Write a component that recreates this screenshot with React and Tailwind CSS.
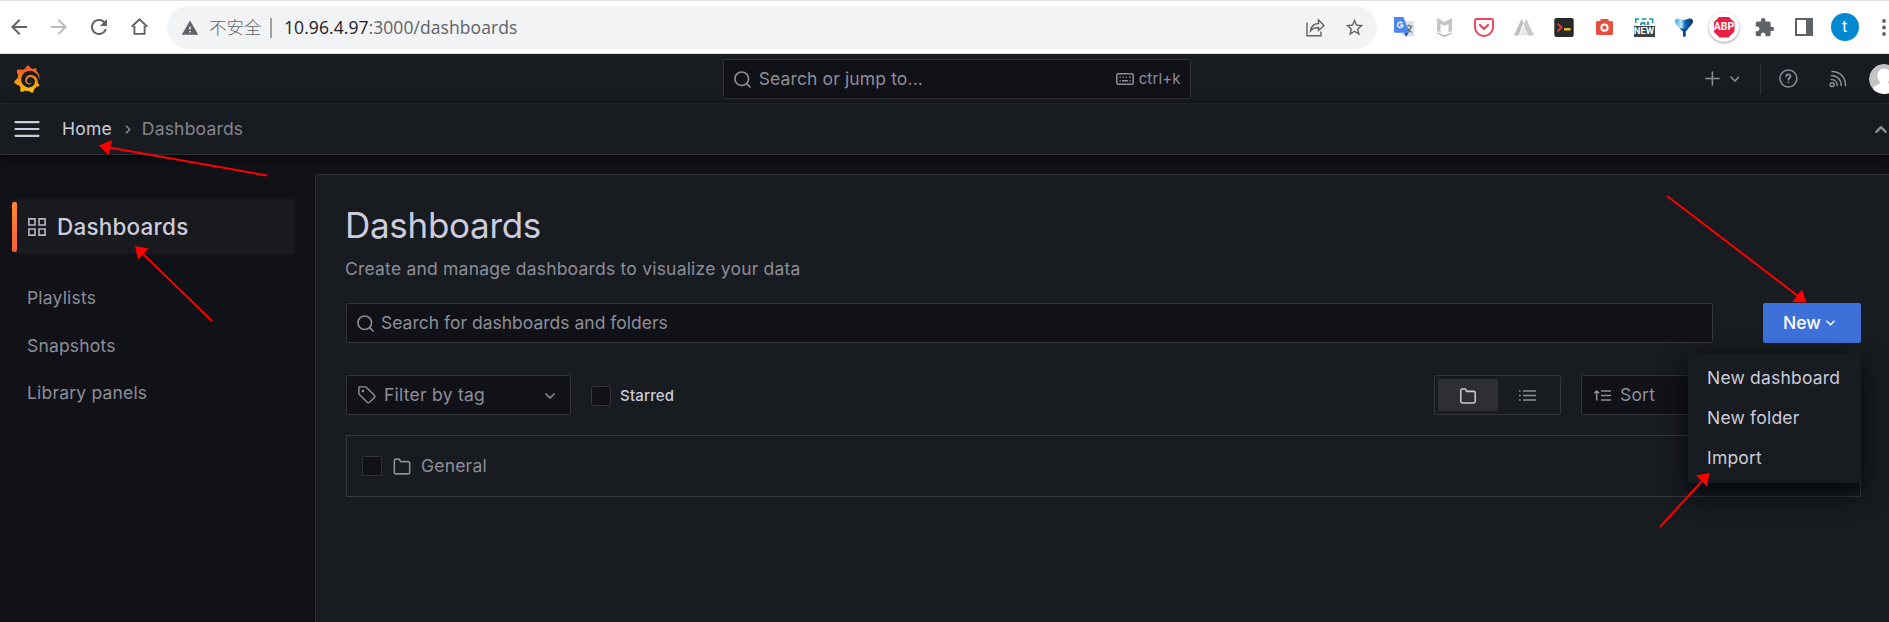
import React from 'react';
import { SiGrafana } from 'react-icons/si';
import { MdArrowBack, MdArrowForward, MdExtension, MdRefresh, MdStarBorder, MdWarning } from 'react-icons/md';

function Search({ className }) {
  return (
    <svg className={className} viewBox="0 0 18 18" fill="none" stroke="currentColor" strokeWidth="1.7" strokeLinecap="round">
      <circle cx="8.2" cy="8.2" r="7.2" />
      <path d="M13.4 13.4 17 17" />
    </svg>
  );
}

function Chevron({ className, up }) {
  return (
    <svg className={className} viewBox="0 0 10 6" fill="none" stroke="currentColor" strokeWidth="1.6" strokeLinecap="round" strokeLinejoin="round">
      <path d={up ? 'M1 5 5 1 9 5' : 'M1 1 5 5 9 1'} />
    </svg>
  );
}

function Folder({ className }) {
  return (
    <svg className={className} viewBox="0 0 18 18" fill="none" stroke="currentColor" strokeWidth="1.7" strokeLinejoin="round">
      <path d="M.9 15V3Q.9 1.2 2.7 1.2H6.2L7.4 3.8H15.3Q17.1 3.8 17.1 5.6V15Q17.1 16.8 15.3 16.8H2.7Q.9 16.8.9 15Z" />
    </svg>
  );
}

function Cell({ children }) {
  return <div className="flex h-full w-10 shrink-0 items-center justify-center">{children}</div>;
}

function Extensions() {
  return (
    <div className="flex h-[52px] w-[505px] shrink-0 overflow-hidden">
      <Cell>
        <svg className="h-5 w-5" viewBox="0 0 20 20">
          <rect x="8" y="4" width="12" height="15.5" rx="1" fill="#dfe1e4" />
          <path d="M11.5 9h7M15 7.5V9M17.5 9c-.8 3-2.5 5-5 6.500M13 10.500c1 2 2.600 4 4.800 5" stroke="#5f7078" strokeWidth="1.200" fill="none" />
          <path d="M10 15.500h5L12 19.800Z" fill="#2a48b8" />
          <path d="M1 0H9.500L15 15.800H1Q0 15.800 0 14.800V1Q0 0 1 0Z" fill="#4a86ee" />
          <path d="M8.300 6.200A2.700 2.700 0 1 0 8.900 8.300H6.200" stroke="#fff" strokeWidth="1.400" fill="none" />
        </svg>
      </Cell>
      <Cell>
        <svg className="h-[19px] w-[15px]" viewBox="0 0 15 19">
          <path d="M0 0 7.500 4 15 0V13L11.500 14.500V6L7.500 8 3.500 6V14.500L0 13Z" fill="#c4c4c4" />
          <path d="M0 14.500 7.500 17.300 15 14.500V15.500L7.500 19 0 15.500Z" fill="#b0b0b0" />
        </svg>
      </Cell>
      <Cell>
        <svg className="h-[19px] w-5" viewBox="0 0 20 19" fill="none" stroke="#ee4358" strokeWidth="1.900" strokeLinejoin="round">
          <path d="M2.500 1H17.500Q19 1 19 2.500V9A9 9 0 0 1 1 9V2.500Q1 1 2.500 1Z" />
          <path d="m6 7 4 4 4-4" strokeWidth="2.200" strokeLinecap="round" />
        </svg>
      </Cell>
      <Cell>
        <svg className="h-[17px] w-5" viewBox="0 0 20 17">
          <path d="M7.500 0 9.500 3.500 4.500 16.500H0Z" fill="#bebebe" />
          <path d="M12.500 0 20 16.500H14L9.500 5Z" fill="#cacaca" />
          <path d="M9.700 7 14 16.500H5Z" fill="#e8e8e8" />
        </svg>
      </Cell>
      <Cell>
        <svg className="h-[19px] w-5" viewBox="0 0 20 19" fill="none">
          <rect x=".3" width="19.400" height="19" rx="2" fill="#292929" />
          <path d="m3.500 5.500 4 4-4 4" stroke="#df3b34" strokeWidth="1.900" />
          <path d="M10 11.300h6.500" stroke="#f1bd22" strokeWidth="2.400" />
        </svg>
      </Cell>
      <Cell>
        <svg className="h-4 w-[17px]" viewBox="0 0 17 16">
          <path d="M4.500 0h8v2H15.500Q17 2 17 3.500V14.500Q17 16 15.500 16H1.500Q0 16 0 14.500V3.500Q0 2 1.500 2H4.500Z" fill="#e84e40" />
          <circle cx="8.500" cy="8.700" r="3.100" fill="none" stroke="#fff" strokeWidth="2" />
        </svg>
      </Cell>
      <Cell>
        <div className="flex h-[19px] w-[21px] flex-col justify-between">
          <svg className="h-[7px] w-[21px]" viewBox="0 0 21 7" fill="none" stroke="#159aa0" strokeWidth="1.500">
            <path d="M1.700 5V1h3.500M7.500 1h5M15 1h3.700V5" />
            <path d="M7 7C7 4 11 4 11 7M14 3.500V7" strokeWidth="1.900" />
          </svg>
          <div className="flex h-[11px] items-center justify-center bg-[#3c4043] font-['Roboto',sans-serif] text-[9.5px] leading-none font-bold text-white">NEW</div>
        </div>
      </Cell>
      <Cell>
        <svg className="h-[19px] w-[18px]" viewBox="0 0 18 19">
          <defs>
            <linearGradient id="funnel">
              <stop offset="0" stopColor="#3a9fe6" />
              <stop offset=".34" stopColor="#c4e8fa" />
              <stop offset=".55" stopColor="#116ebe" />
              <stop offset="1" stopColor="#052c59" />
            </linearGradient>
          </defs>
          <path d="M0 4Q0 0 3.500.500L9 2 14.500.500Q18 0 18 4 17 7 13.500 10L10.500 13.500V18.500H8V13.500L4.500 10Q1 7 0 4Z" fill="url(#funnel)" />
          <path d="M4.500 10 8 13.500V18.500H10.500V13.500L13.500 10 9.300 11Z" fill="#0a4584" />
        </svg>
      </Cell>
      <Cell>
        <div className="flex h-[30px] w-[30px] items-center justify-center rounded-full bg-white shadow-[0_1px_3px_rgba(0,0,0,0.4)]">
          <div className="flex h-[21px] w-[21px] items-center justify-center bg-[#ed1e45] font-['Roboto',sans-serif] text-[10.5px] leading-none font-bold text-white [clip-path:polygon(29%_0,71%_0,100%_29%,100%_71%,71%_100%,29%_100%,0_71%,0_29%)]">ABP</div>
        </div>
      </Cell>
      <Cell><MdExtension className="h-[21px] w-[21px] text-[#5f6368]" /></Cell>
      <Cell>
        <div className="h-[18px] w-[18px] border-2 border-r-[7px] border-[#5f6368]" />
      </Cell>
      <Cell>
        <div className="ml-px flex h-7 w-7 shrink-0 items-center justify-center rounded-full bg-[#0288d1] font-['Roboto',sans-serif] text-[16px] leading-none text-white">t</div>
      </Cell>
      <Cell>
        <svg className="h-[17px] w-1" viewBox="0 0 4 17" fill="#5f6368">
          <circle cx="2" cy="2" r="1.900" />
          <circle cx="2" cy="8.500" r="1.900" />
          <circle cx="2" cy="15" r="1.900" />
        </svg>
      </Cell>
    </div>
  );
}

function BrowserBar() {
  return (
    <div className="flex h-[54px] shrink-0 items-start border-t border-b border-[#dee1e6] bg-white text-[#5f6368]">
      <div className="flex h-[51px] w-[167px] shrink-0 items-center">
        <div className="-ml-px flex h-full">
          <Cell><MdArrowBack className="h-6 w-6" /></Cell>
          <Cell><MdArrowForward className="h-6 w-6 text-[#babcbe]" /></Cell>
          <Cell><MdRefresh className="h-6 w-6" /></Cell>
          <Cell>
            <svg className="h-[17px] w-[17px]" viewBox="0 0 17 17" fill="none" stroke="currentColor" strokeWidth="1.900">
              <path d="M3.400 8V15.900H13.600V8M.700 8.700 8.500 1.300 16.300 8.700" />
            </svg>
          </Cell>
        </div>
      </div>
      <div className="mt-[5px] flex h-[43px] min-w-0 flex-1 items-center rounded-full bg-[#f1f3f4] pr-[12px] pl-[14px]">
        <MdWarning className="h-[18px] w-[18px]" />
        <span className="mb-px ml-[10px] w-[54px] font-['Noto_Sans_CJK_SC',sans-serif] text-[17.500px] leading-none font-light whitespace-nowrap">不安全</span>
        <span className="ml-[7px] h-5 w-0.5 bg-[#a0a2a5]" />
        <span className="ml-[12px] font-['Open_Sans',sans-serif] text-[17.5px] leading-none tracking-[0.07px] whitespace-nowrap">
          <span className="text-[#202124]">10.96.4.97</span>:3000/dashboards
        </span>
        <svg className="mr-[19px] ml-auto h-[19px] w-[19px]" viewBox="0 0 19 19" fill="none" stroke="currentColor" strokeWidth="1.400">
          <path d="M1 4.500V17.700H15V13.500M4.500 13C5 8.500 8 5.800 12.500 5.500V2L18 7.500 12.500 12.500V9.500C9 9.500 6.500 10.500 4.500 13Z" />
        </svg>
        <MdStarBorder className="h-[21px] w-[21px]" />
      </div>
      <div className="w-[7px] shrink-0" />
      <Extensions />
    </div>
  );
}

function TopBar() {
  return (
    <div className="flex h-[50px] shrink-0 items-center border-b border-[#2c2e33] bg-[#181b1f] pl-[13px] text-[#8d8e9a]">
      <svg className="h-0 w-0">
        <defs>
          <linearGradient id="flame" x1="0" y1="0" x2="0" y2="1">
            <stop offset=".15" stopColor="#f05a28" />
            <stop offset="1" stopColor="#fbca0a" />
          </linearGradient>
        </defs>
      </svg>
      <SiGrafana className="h-[30px] w-[28px]" style={{ fill: 'url(#flame)' }} />
      <div className="ml-[682px] flex h-10 w-[468px] shrink-0 items-center rounded-[2px] border border-[#2f3136] bg-[#111217] pt-px pr-[9px] pl-[10px]">
        <Search className="h-[17px] w-[17px]" />
        <span className="ml-[8px] text-[17.5px] tracking-[0.13px]">Search or jump to...</span>
        <svg className="mr-[5px] ml-auto h-3 w-[18px]" viewBox="0 0 18 12" fill="none" stroke="currentColor" strokeWidth="1.500">
          <rect x=".8" y=".8" width="16.400" height="10.400" rx="1.500" />
          <path d="M3.500 4.200h1.200M6.500 4.200h1.200M9.500 4.200h1.200M13 4.200h1.500M3.500 7.800h1.200M6 7.800h6M13.300 7.800h1.200" />
        </svg>
        <span className="text-[15px] tracking-[0.15px]">ctrl+k</span>
      </div>
      <svg className="ml-[514px] h-[15px] w-[15px]" viewBox="0 0 15 15" stroke="currentColor" strokeWidth="1.500" strokeLinecap="round">
        <path d="M7.500.800V14.200M.800 7.500H14.200" />
      </svg>
      <Chevron className="ml-[10px] h-[6px] w-[10px]" />
      <div className="ml-[21px] h-[30px] w-px bg-[#303237]" />
      <svg className="ml-[18px] h-[19px] w-[19px]" viewBox="0 0 19 19" fill="none" stroke="currentColor" strokeWidth="1.500" strokeLinecap="round">
        <circle cx="9.500" cy="9.500" r="8.600" />
        <path d="M7.300 7.400C7.500 4.500 11.700 4.700 11.600 7.400 11.500 9 9.500 9 9.500 10.500M9.500 13.300v.1" strokeWidth="1.800" />
      </svg>
      <svg className="ml-[31px] h-[18px] w-[18px]" viewBox="0 0 18 18" fill="none" stroke="currentColor" strokeWidth="1.500" strokeLinecap="round">
        <circle cx="3.200" cy="14.700" r="2" />
        <path d="M2.300 9.500C5.800 9.500 8.300 12 8.300 15.700M2.300 5.500C8.200 5.500 12.300 9.500 12.300 15.700M3 1.300C11 1.300 16.700 7 16.700 15.700" />
      </svg>
      <div className="ml-[22px] h-[30px] w-5 shrink-0 overflow-hidden">
        <svg className="h-[30px] w-[30px] overflow-hidden rounded-full" viewBox="0 0 30 30">
          <circle cx="15" cy="15" r="15" fill="#c4c4c4" />
          <path d="M15 4.500C11 4.500 8.500 7.500 8.500 11.500 8.500 14.500 9.500 16.500 11 18 11 20 9 20.500 6.500 21.800 4.500 23 3.500 24.500 3 27V30H27V27C26.500 24.500 25.500 23 23.500 21.800 21 20.500 19 20 19 18 20.500 16.500 21.500 14.500 21.500 11.500 21.500 7.500 19 4.500 15 4.500Z" fill="#fff" />
        </svg>
      </div>
    </div>
  );
}

function Breadcrumbs() {
  return (
    <div className="z-10 flex h-[51px] shrink-0 items-center border-b border-[#2c2e33] bg-[#181b1f] pl-[14px] shadow-[0_2px_10px_rgba(0,0,0,0.85)]">
      <svg className="h-4 w-[26px]" viewBox="0 0 26 16" stroke="#ccccdc" strokeWidth="2.200" strokeLinecap="round">
        <path d="M1.500 1.200H24.500M1.500 8H24.500M1.500 14.800H24.500" />
      </svg>
      <span className="ml-[22px] text-[17.5px] tracking-[0.2px] text-[#ccccdc]">Home</span>
      <svg className="ml-[13px] h-[9px] w-[6px]" viewBox="0 0 6 9" fill="none" stroke="#8d8e9a" strokeWidth="1.500">
        <path d="m1 .8 3.700 3.700L1 8.200" />
      </svg>
      <span className="ml-[11px] text-[17.5px] tracking-[0.19px] text-[#84858f]">Dashboards</span>
      <Chevron up className="mr-[2px] ml-auto h-[7px] w-3 stroke-2 text-[#8d8e9a]" />
    </div>
  );
}

function Sidebar() {
  return (
    <nav className="w-[315px] shrink-0 pt-11 text-[#8d8e9a]">
      <div className="ml-3 flex h-[55px] w-[283px] items-center rounded-[3px] bg-[#191a1d]">
        <div className="h-[50px] w-[5px] rounded-[2px] bg-linear-to-b from-[#ff8833] to-[#f55f3e]" />
        <svg className="ml-[11px] h-[18px] w-[18px]" viewBox="0 0 18 18" fill="none" stroke="#b8b8c6" strokeWidth="1.600">
          <path d="M.9.900H7V7H.9ZM11 .900H17.100V7H11ZM.9 11H7V17.100H.9ZM11 11H17.100V17.100H11Z" />
        </svg>
        <span className="ml-[11px] text-[22.500px] font-medium tracking-[0.2px] text-[#ccccdc]">Dashboards</span>
      </div>
      <div className="mt-5 ml-[27px] text-[17.5px] tracking-[0.19px]">
        <div className="flex h-[48px] items-center">Playlists</div>
        <div className="flex h-[48px] items-center">Snapshots</div>
        <div className="flex h-[46px] items-center">Library panels</div>
      </div>
    </nav>
  );
}

function Menu() {
  return (
    <div className="absolute top-[50px] right-0 z-10 w-[173px] rounded-[3px] bg-[#181b1f] py-[5px] pl-[19px] text-[17.5px] tracking-[0.2px] text-[#ccccdc] shadow-[0_10px_25px_rgba(1,4,9,0.9)]">
      <div className="flex h-10 items-center font-normal whitespace-nowrap">New dashboard</div>
      <div className="flex h-10 items-center">New folder</div>
      <div className="flex h-10 items-center">Import</div>
    </div>
  );
}

function Checkbox() {
  return <div className="h-5 w-5 shrink-0 rounded-[2px] border border-[#323438] bg-[#111217]" />;
}

function Content() {
  return (
    <main className="mt-[19px] flex-1 rounded-tl-[3px] border-t border-l border-[#2c2e33] bg-[#181b1f] pt-[28px] pr-7 pl-[30px] text-[17.5px] text-[#8d8e9a]">
      <h1 className="-ml-px h-[44px] text-[35px] leading-[44px] tracking-[-0.3px] text-[#ccccdc]">Dashboards</h1>
      <p className="mt-[8px] -ml-px h-[28px] leading-[28px] tracking-[0.21px]">Create and manage dashboards to visualize your data</p>
      <div className="mt-5 flex h-10">
        <div className="flex w-[1367px] items-center rounded-[2px] border border-[#323438] bg-[#111217] pl-[10px]">
          <Search className="h-[17px] w-[17px]" />
          <span className="ml-[7px]">Search for dashboards and folders</span>
        </div>
        <div className="relative ml-auto w-[98px]">
          <button className="flex h-10 w-full items-center rounded-[2px] bg-[#3d71d9] pl-5 font-medium text-white">
            New
            <Chevron className="ml-[5px] h-[6px] w-[9px]" />
          </button>
          <Menu />
        </div>
      </div>
      <div className="mt-8 flex h-10 items-center">
        <div className="flex h-10 w-[225px] items-center rounded-[2px] border border-[#323438] bg-[#111217] pr-[15px] pl-[11px]">
          <svg className="h-[18px] w-[18px]" viewBox="0 0 18 18" fill="none" stroke="currentColor" strokeWidth="1.400" strokeLinejoin="round">
            <path d="M.9.900H8L16.300 9.200Q17.500 10.400 16.300 11.600L11.600 16.300Q10.400 17.500 9.200 16.300L.9 8Z" />
            <circle cx="5" cy="5" r=".6" fill="currentColor" />
          </svg>
          <span className="ml-2 tracking-[0.25px]">Filter by tag</span>
          <Chevron className="mt-px ml-auto h-[6px] w-[10px]" />
        </div>
        <div className="mt-[2px] ml-5 flex items-center gap-[9px]">
          <Checkbox />
          <span className="text-[15px] font-medium tracking-[0.19px] text-[#ccccdc]">Starred</span>
        </div>
        <div className="ml-auto flex h-10 w-[127px] rounded-[2px] border border-[#323438] p-[3px]">
          <div className="flex w-[60px] items-center justify-center rounded-[2px] bg-[#2d2f33] text-[#ccccdc]">
            <Folder className="mt-px h-4 w-[18px]" />
          </div>
          <div className="flex w-[60px] items-center justify-center">
            <svg className="mt-px h-[11px] w-[17px]" viewBox="0 0 17 11" stroke="currentColor" strokeWidth="1.500">
              <path d="M4 1H17M4 5.500H17M4 10H17M0 1H1.600M0 5.500H1.600M0 10H1.600" />
            </svg>
          </div>
        </div>
        <div className="ml-5 flex h-10 w-[280px] items-center rounded-[2px] border border-[#323438] bg-[#111217] pl-3">
          <svg className="h-[11px] w-[17px]" viewBox="0 0 17 11" fill="none" stroke="currentColor" strokeWidth="1.500">
            <path d="M7 1H17M7 5.500H17M7 10H17M2.700 10.500V1M.3 3.300 2.700 1 5.100 3.300" />
          </svg>
          <span className="ml-[9px] tracking-[0.2px]">Sort</span>
        </div>
      </div>
      <div className="mt-5 flex h-[62px] items-center border border-[#37393e] pl-[15px]">
        <Checkbox />
        <Folder className="ml-[11px] h-[17px] w-[18px]" />
        <span className="ml-[10px] tracking-[0.2px]">General</span>
      </div>
    </main>
  );
}

const ARROWS = [
  ['M267 175.500 109 147.500', '99,145.500 112,140 108.500,155'],
  ['M212 321 142 253', '135,246 148.500,248.500 138,259.500'],
  ['M1667 196 1798 296', '1806.500,302.500 1802,289.500 1792,302'],
  ['M1660 527 1703 480', '1709.500,473 1707,486.500 1696,475.500'],
];

export default function App() {
  return (
    <div className="relative flex h-[622px] w-[1889px] flex-col overflow-hidden bg-[#111217] font-['Inter',sans-serif]">
      <BrowserBar />
      <TopBar />
      <Breadcrumbs />
      <div className="flex min-h-0 flex-1">
        <Sidebar />
        <Content />
      </div>
      <svg className="pointer-events-none absolute inset-0 z-20 h-[622px] w-[1889px]" viewBox="0 0 1889 622">
        {ARROWS.map(([line, head]) => (
          <g key={line}>
            <path d={line} stroke="#f00" strokeWidth="2" />
            <polygon points={head} fill="#f00" />
          </g>
        ))}
      </svg>
    </div>
  );
}
